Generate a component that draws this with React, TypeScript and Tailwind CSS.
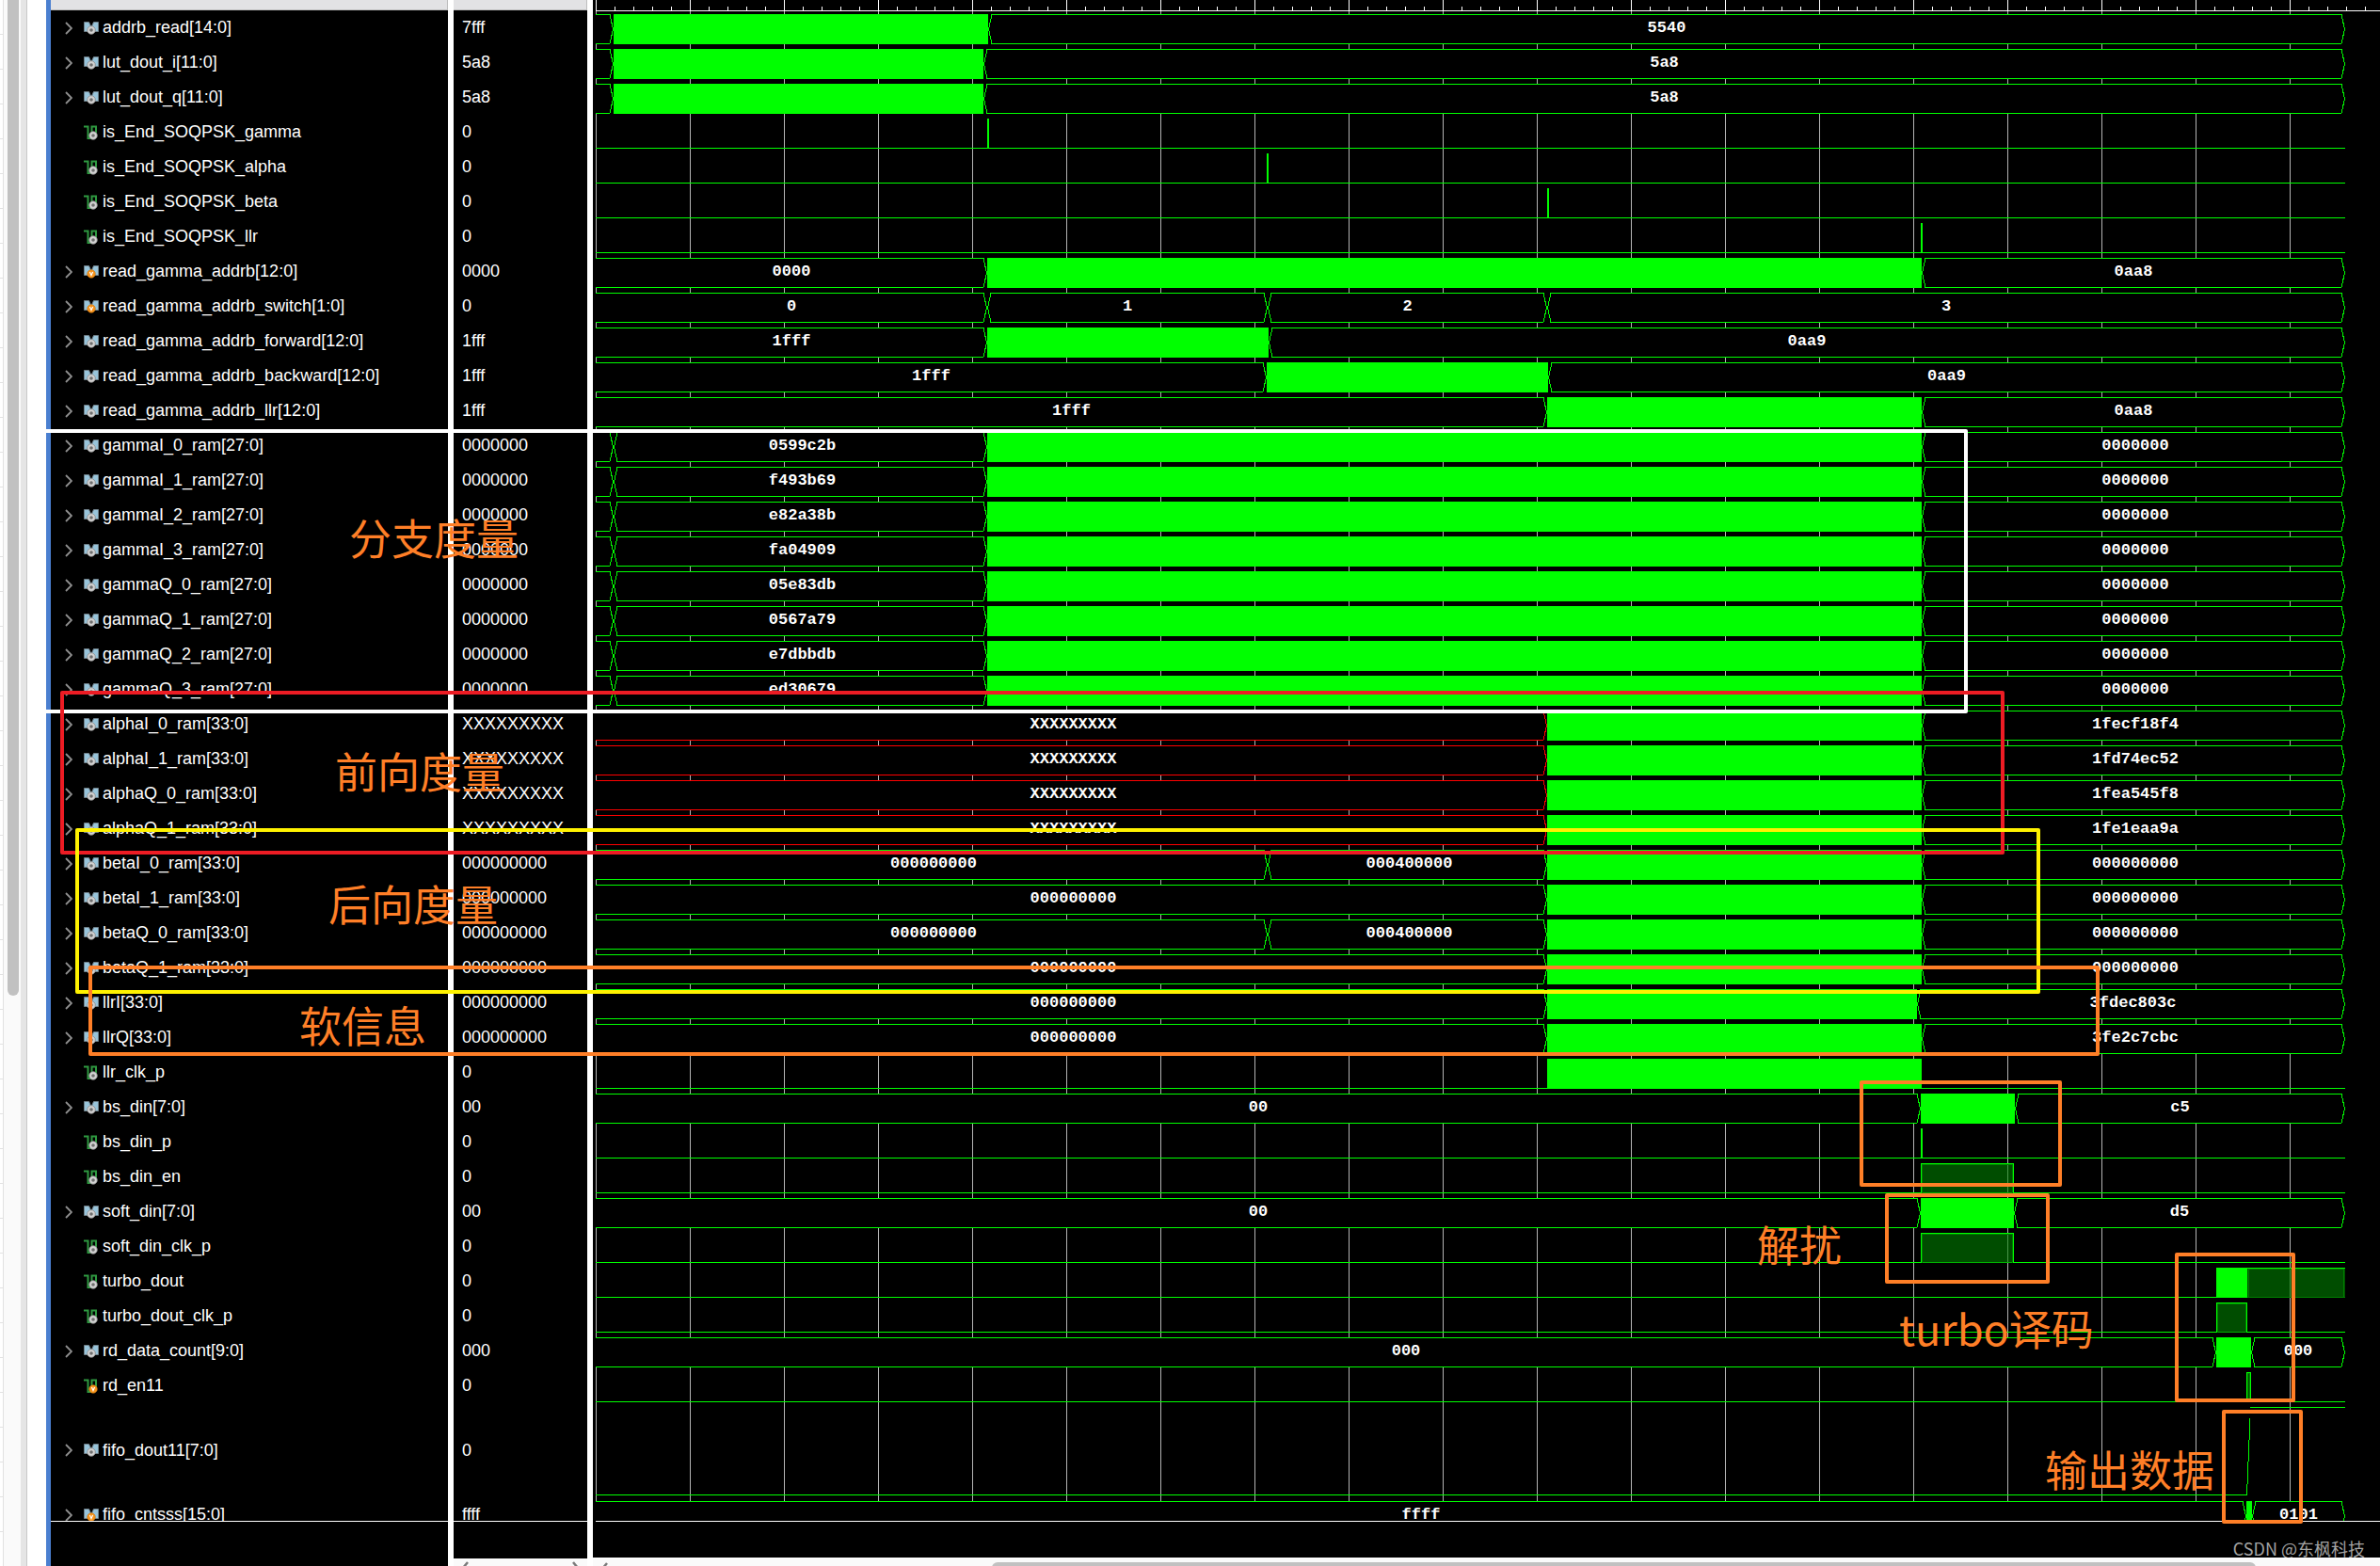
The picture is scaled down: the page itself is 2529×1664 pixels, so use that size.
import React from "react";

type Segment = {
  from: number;
  to: number;
  kind: "value" | "busy" | "unknown" | "dim" | "pulse";
  label?: string;
};

type Signal = {
  name: string;
  value: string;
  type: "bus" | "bit" | "analog";
  variable?: boolean;
  segments: Segment[];
};

// Sample positions along the time axis, in pixels from the left edge of the plot.
const START = 0;
const RESET = 19;
const T1 = 416;
const T2 = 714;
const T3 = 1011;
const T4 = 1409;
const END = 1859;

const val = (from: number, to: number, label?: string): Segment => ({ from, to, kind: "value", label });
const busy = (from: number, to: number): Segment => ({ from, to, kind: "busy" });
const unknown = (from: number, to: number, label: string): Segment => ({ from, to, kind: "unknown", label });
const dim = (from: number, to: number): Segment => ({ from, to, kind: "dim" });
const pulse = (at: number): Segment => ({ from: at, to: at + 2, kind: "pulse" });

const bus = (name: string, value: string, segments: Segment[], variable = false): Signal => ({
  name,
  value,
  type: "bus",
  segments,
  variable,
});
const bit = (name: string, segments: Segment[], variable = false): Signal => ({
  name,
  value: "0",
  type: "bit",
  segments,
  variable,
});

const gamma = (name: string, label: string) =>
  bus(name, "0000000", [val(START, RESET), val(RESET, T1, label), busy(T1, T4), val(T4, END, "0000000")]);
const alpha = (name: string, label: string) =>
  bus(name, "XXXXXXXXX", [unknown(START, T3, "XXXXXXXXX"), busy(T3, T4), val(T4, END, label)]);
const betaSplit = (name: string) =>
  bus(name, "000000000", [
    val(START, T2, "000000000"),
    val(T2, T3, "000400000"),
    busy(T3, T4),
    val(T4, END, "000000000"),
  ]);
const flat = (name: string, end: string, stop = T4) =>
  bus(name, "000000000", [val(START, T3, "000000000"), busy(T3, stop), val(stop, END, end)]);

const SIGNALS: Signal[] = [
  bus("addrb_read[14:0]", "7fff", [val(START, RESET), busy(RESET, 417), val(417, END, "5540")]),
  bus("lut_dout_i[11:0]", "5a8", [val(START, RESET), busy(RESET, 412), val(412, END, "5a8")]),
  bus("lut_dout_q[11:0]", "5a8", [val(START, RESET), busy(RESET, 412), val(412, END, "5a8")]),
  bit("is_End_SOQPSK_gamma", [pulse(T1)]),
  bit("is_End_SOQPSK_alpha", [pulse(T2 - 1)]),
  bit("is_End_SOQPSK_beta", [pulse(T3)]),
  bit("is_End_SOQPSK_llr", [pulse(T4 - 1)]),
  bus("read_gamma_addrb[12:0]", "0000", [val(START, T1, "0000"), busy(T1, T4), val(T4, END, "0aa8")], true),
  bus(
    "read_gamma_addrb_switch[1:0]",
    "0",
    [val(START, T1, "0"), val(T1, T2, "1"), val(T2, T3, "2"), val(T3, END, "3")],
    true,
  ),
  bus("read_gamma_addrb_forward[12:0]", "1fff", [val(START, T1, "1fff"), busy(T1, 715), val(715, END, "0aa9")]),
  bus("read_gamma_addrb_backward[12:0]", "1fff", [val(START, 713, "1fff"), busy(713, 1012), val(1012, END, "0aa9")]),
  bus("read_gamma_addrb_llr[12:0]", "1fff", [val(START, T3, "1fff"), busy(T3, T4), val(T4, END, "0aa8")]),
  gamma("gammaI_0_ram[27:0]", "0599c2b"),
  gamma("gammaI_1_ram[27:0]", "f493b69"),
  gamma("gammaI_2_ram[27:0]", "e82a38b"),
  gamma("gammaI_3_ram[27:0]", "fa04909"),
  gamma("gammaQ_0_ram[27:0]", "05e83db"),
  gamma("gammaQ_1_ram[27:0]", "0567a79"),
  gamma("gammaQ_2_ram[27:0]", "e7dbbdb"),
  gamma("gammaQ_3_ram[27:0]", "ed30679"),
  alpha("alphaI_0_ram[33:0]", "1fecf18f4"),
  alpha("alphaI_1_ram[33:0]", "1fd74ec52"),
  alpha("alphaQ_0_ram[33:0]", "1fea545f8"),
  alpha("alphaQ_1_ram[33:0]", "1fe1eaa9a"),
  betaSplit("betaI_0_ram[33:0]"),
  flat("betaI_1_ram[33:0]", "000000000"),
  betaSplit("betaQ_0_ram[33:0]"),
  flat("betaQ_1_ram[33:0]", "000000000"),
  flat("llrI[33:0]", "3fdec803c", 1404),
  flat("llrQ[33:0]", "3fe2c7cbc"),
  bit("llr_clk_p", [busy(T3, T4)]),
  bus("bs_din[7:0]", "00", [val(START, 1408, "00"), busy(1408, 1508), val(1508, END, "c5")]),
  bit("bs_din_p", [pulse(T4 - 1)]),
  bit("bs_din_en", [dim(1408, 1507)]),
  bus("soft_din[7:0]", "00", [val(START, 1408, "00"), busy(1408, 1507), val(1507, END, "d5")]),
  bit("soft_din_clk_p", [dim(1408, 1507)]),
  bit("turbo_dout", [busy(1722, 1755), dim(1755, 1859)]),
  bit("turbo_dout_clk_p", [dim(1722, 1755)]),
  bus("rd_data_count[9:0]", "000", [val(START, 1722, "000"), busy(1722, 1759), val(1759, END, "000")]),
  bit("rd_en11", [dim(1754, 1759)], true),
  { name: "fifo_dout11[7:0]", value: "0", type: "analog", segments: [] },
  bus("fifo_cntsss[15:0]", "ffff", [val(START, 1754, "ffff"), busy(1754, 1760), val(1760, END, "0101")], true),
];

const rowHeight = (s: Signal, i: number) =>
  s.type === "analog" ? "h-[100px]" : i === SIGNALS.length - 1 ? "h-[25px]" : "h-[37px]";

const GREEN = "#00ff00";
const RED = "#ff0000";

function SignalIcon({ type, variable }: { type: Signal["type"]; variable?: boolean }) {
  const scalar = type === "bit";
  const cx = scalar ? 10 : 8;
  const cy = scalar ? 11 : 10;
  return (
    <svg width="16" height="16" viewBox="0 0 16 16" className="shrink-0" aria-hidden="true">
      {scalar ? (
        <path d="M0 1.500H4.500V14H8.500V1.500H13V9" fill="none" stroke="#2f9a41" strokeWidth="2" />
      ) : (
        <>
          <path d="M0.500 1.500H5.500L8 7L5 11.500H0.500Z" fill="#98c4da" stroke="#6f7f88" />
          <path d="M15.500 1.500H10.500L8 7L11 11.500H15.500Z" fill="#98c4da" stroke="#6f7f88" />
        </>
      )}
      {variable ? (
        <>
          <circle cx={cx} cy={cy} r="4.300" fill="#f7941d" stroke="#c9730c" strokeWidth="0.600" />
          <path d={`M${cx - 1.6} ${cy - 2}L${cx} ${cy + 1.6}L${cx + 1.6} ${cy - 2}`} fill="none" stroke="#fff" strokeWidth="1.200" />
        </>
      ) : (
        <>
          <circle cx={cx} cy={cy} r="4.300" fill="#d2d2d2" stroke="#8c8c8c" strokeWidth="0.800" />
          <circle cx={cx} cy={cy} r="1.800" fill="#6e6e6e" />
        </>
      )}
    </svg>
  );
}

function Chevron() {
  return (
    <svg width="8" height="14" viewBox="0 0 8 14" aria-hidden="true">
      <path d="M1 1L7 7L1 13" fill="none" stroke="#8f8f8f" strokeWidth="1.800" />
    </svg>
  );
}

function BusSegment({ seg }: { seg: Segment }) {
  if (seg.kind === "busy") {
    return <rect x={seg.from} y="4" width={seg.to - seg.from} height="32" fill={GREEN} />;
  }
  const color = seg.kind === "unknown" ? RED : GREEN;
  const first = seg.from === START;
  const a = seg.from;
  const l = first ? a : a + 4;
  const r = seg.to - 4;
  const left = first ? "" : `L${a} 20`;
  return (
    <g>
      <path d={`M${l} 4H${r}L${seg.to} 20L${r} 36H${l}${left}Z`} fill="#000" />
      <path
        d={`${first ? `M${a} 4.5` : `M${a + 0.5} 20L${l} 4.5`}H${r}L${seg.to - 0.5} 20L${r} 35.5H${l}${first ? "" : `L${a + 0.5} 20`}`}
        fill="none"
        stroke={color}
      />
      {seg.label && (
        <text
          x={(seg.from + seg.to) / 2 + (seg.label.length > 6 ? 2 : 0)}
          y="23"
          textAnchor="middle"
          fill="#fff"
          className="font-['Liberation_Mono',monospace] text-[17px] font-bold"
        >
          {seg.label}
        </text>
      )}
    </g>
  );
}

function BitTrace({ segments }: { segments: Segment[] }) {
  return (
    <g>
      <rect x={START} y="35" width={END} height="1" fill={GREEN} />
      {segments.map((s) => {
        const w = s.to - s.from;
        if (s.kind !== "dim") {
          return <rect key={s.from} x={s.from} y="4" width={w} height="32" fill={GREEN} />;
        }
        return (
          <g key={s.from}>
            <rect x={s.from} y="5" width={w} height="31" fill="#008000" fillOpacity="0.600" />
            <path d={`M${s.from + 1.5} 35.500V5.500H${s.to - 1.5}V35.500`} fill="none" stroke="#008000" />
            {s.to < END ? (
              <path d={`M${s.from + 0.5} 36V4.500H${s.to - 0.5}V36`} fill="none" stroke={GREEN} />
            ) : (
              <>
                <rect x={s.from} y="4" width={w} height="1" fill={GREEN} />
                <rect x={s.from} y="35" width={w} height="1" fill="#008000" />
              </>
            )}
          </g>
        );
      })}
    </g>
  );
}

function Wave({ signal }: { signal: Signal }) {
  return (
    <svg className="block h-full w-full overflow-hidden" shapeRendering="crispEdges" aria-label={signal.name}>
      {signal.type === "bus" && signal.segments.map((s) => <BusSegment key={s.from} seg={s} />)}
      {signal.type === "bit" && <BitTrace segments={signal.segments} />}
      {signal.type === "analog" && (
        <>
          <path d="M0 97.500H1754.500V87L1755.500 85V63L1756.500 61V40L1757.500 38V16" fill="none" stroke={GREEN} />
          <path d="M1758 4.500H1859" fill="none" stroke={GREEN} />
        </>
      )}
    </svg>
  );
}

function Ruler() {
  return (
    <svg className="absolute inset-0 h-full w-full" shapeRendering="crispEdges" aria-hidden="true">
      <defs>
        <pattern id="major" width="100" height="1617" patternUnits="userSpaceOnUse">
          <rect x="0" y="0" width="1" height="12" fill="#fff" />
          <rect x="0" y="12" width="1" height="1604" fill="#b4b4b4" />
        </pattern>
        <pattern id="minor" width="20" height="12" patternUnits="userSpaceOnUse">
          <rect x="0" y="7" width="1" height="4" fill="#fff" />
        </pattern>
      </defs>
      <rect width="100%" height="1616" fill="url(#major)" />
      <rect width="100%" height="12" fill="url(#minor)" />
      <rect y="11" width="100%" height="1" fill="#fff" />
    </svg>
  );
}

function ScrollArrow({ flip }: { flip?: boolean }) {
  return (
    <svg width="8" height="12" viewBox="0 0 8 12" className="shrink-0" aria-hidden="true">
      <path d={flip ? "M1 1L6 7L1 12" : "M7 1L2 7L7 12"} fill="none" stroke="#7a7a7a" strokeWidth="2.500" />
    </svg>
  );
}

const FRAMES = [
  "left-[32px] top-[456px] h-[302px] w-[2059px] border-white",
  "left-[64px] top-[734px] h-[174px] w-[2066px] border-[#ed1c24]",
  "left-[80px] top-[880px] h-[176px] w-[2088px] border-[#fff200]",
  "left-[94px] top-[1026px] h-[96px] w-[2137px] border-[#ff7f27]",
  "left-[1976px] top-[1148px] h-[113px] w-[215px] border-[#ff7f27]",
  "left-[2003px] top-[1268px] h-[96px] w-[175px] border-[#ff7f27]",
  "left-[2311px] top-[1331px] h-[159px] w-[128px] border-[#ff7f27]",
  "left-[2361px] top-[1498px] h-[121px] w-[86px] border-[#ff7f27]",
];

const NOTES = [
  { text: "分支度量", at: "left-[371px] top-[547px]" },
  { text: "前向度量", at: "left-[356px] top-[795px]" },
  { text: "后向度量", at: "left-[349px] top-[936px]" },
  { text: "软信息", at: "left-[318px] top-[1065px]" },
  { text: "解扰", at: "left-[1867px] top-[1298px]" },
  { text: "turbo译码", at: "left-[2018px] top-[1387px]" },
  { text: "输出数据", at: "left-[2173px] top-[1537px]" },
];

export default function App() {
  return (
    <div className="relative flex min-h-screen overflow-hidden bg-white font-['Liberation_Sans',sans-serif] text-[18px] text-white">
      <aside className="flex w-[54px] shrink-0">
        <div className="w-[3px] bg-[repeating-linear-gradient(to_bottom,#ffffff_0px,#ffffff_36px,#e2e2e2_36px,#e2e2e2_37px)]" />
        <div className="w-px bg-[#e2e2e2]" />
        <div className="w-[18px] bg-[#fafafa] px-[3px]">
          <div className="ml-px h-[1058px] w-3 rounded-b-full bg-[#c1c1c1]" />
        </div>
        <div className="w-[7px] border-r border-[#c8c8c8] bg-[#e5e5e5]" />
        <div className="w-5 bg-white" />
        <div className="w-[5px] bg-[#4a7fd0]" />
      </aside>

      <section className="flex w-[422px] shrink-0 flex-col bg-black" aria-label="Name">
        <div className="h-[11px] border-r border-b border-[#bdbdbd] bg-[#e2e2e4]" />
        <ul>
          {SIGNALS.map((s, i) => (
            <li key={s.name} className={`overflow-hidden ${rowHeight(s, i)}`}>
              <div className={`flex items-center pl-[15px] ${s.type === "analog" ? "h-full" : "h-[37px]"}`}>
                {s.type === "bit" ? (
                  <span className="w-5 shrink-0" />
                ) : (
                  <button type="button" aria-label={`Expand ${s.name}`} className="w-5 shrink-0">
                    <Chevron />
                  </button>
                )}
                <SignalIcon type={s.type} variable={s.variable} />
                <span className="pl-1 whitespace-nowrap">{s.name}</span>
              </div>
            </li>
          ))}
        </ul>
        <div className="h-px bg-white" />
      </section>

      <div className="w-1.5 shrink-0 bg-white" />

      <section className="flex w-[142px] shrink-0 flex-col bg-black" aria-label="Value">
        <div className="h-[11px] border-r border-b border-[#bdbdbd] bg-[#e2e2e4]" />
        <ul>
          {SIGNALS.map((s, i) => (
            <li key={s.name} className={`overflow-hidden ${rowHeight(s, i)}`}>
              <div className={`flex items-center pl-[9px] ${s.type === "analog" ? "h-full" : "h-[37px]"}`}>{s.value}</div>
            </li>
          ))}
        </ul>
        <div className="h-px bg-white" />
        <div className="flex-1" />
        <div className="flex h-2 justify-between overflow-hidden bg-[#fafafa] px-2 pt-[3px]">
          <ScrollArrow />
          <ScrollArrow flip />
        </div>
      </section>

      <div className="w-1.5 shrink-0 bg-white" />

      <section className="flex min-w-0 flex-1 flex-col bg-black" aria-label="Waveforms">
        <div className="relative ml-[3px]">
          <Ruler />
          <div className="relative pt-[11px]">
            {SIGNALS.map((s, i) => (
              <div key={s.name} className={rowHeight(s, i)}>
                <Wave signal={s} />
              </div>
            ))}
          </div>
          <div className="relative h-px bg-white" />
        </div>
        <div className="flex flex-1 items-end justify-end pr-4">
          <span className="font-['Noto_Sans_CJK_SC',sans-serif] text-[18px] leading-5 text-[#a3a3a3]">CSDN @东枫科技</span>
        </div>
        <div className="flex h-[9px] overflow-hidden border-t border-white bg-[#fafafa] pt-1 pl-2">
          <ScrollArrow />
          <div className="mr-[132px] ml-auto h-3 w-[71%] rounded-full bg-[#c1c1c1]" />
        </div>
      </section>

      {FRAMES.map((c) => (
        <div key={c} className={`pointer-events-none absolute rounded-xs border-4 ${c}`} />
      ))}
      {NOTES.map((n) => (
        <p
          key={n.text}
          className={`absolute font-['Noto_Sans_CJK_SC',sans-serif] text-[45px] leading-[48px] whitespace-nowrap text-[#ff7f27] ${n.at}`}
        >
          {n.text}
        </p>
      ))}
    </div>
  );
}
